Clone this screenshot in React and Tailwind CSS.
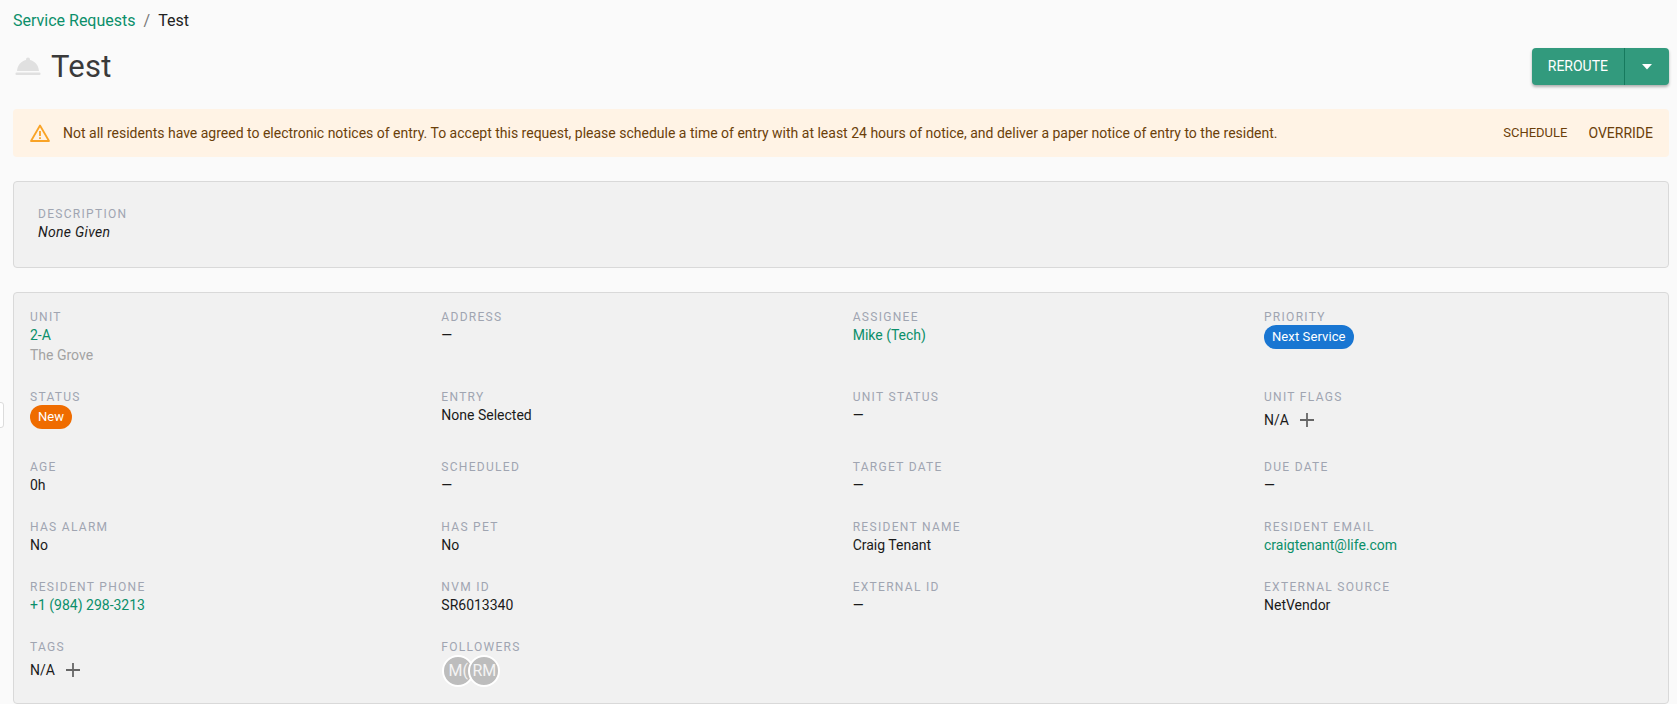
import React from "react";

const Label = ({ children }) => (
  <div className="text-[12px] leading-[16px] tracking-[1.3px] uppercase text-[#a0a5b1]">{children}</div>
);
const Value = ({ children }) => <div className="text-[14px] leading-[20px] text-[#1a1a1a]">{children}</div>;
const LinkV = ({ children }) => <div className="text-[14px] leading-[20px] text-[#0b8f6a]">{children}</div>;
const Dash = () => <Value>—</Value>;

const Plus = () => (
  <svg width="14" height="14" viewBox="0 0 14 14" className="ml-[11px] text-[#666]">
    <path d="M7 0V14M0 7H14" stroke="currentColor" strokeWidth="1.8" fill="none" />
  </svg>
);

const Field = ({ label, children, h }) => (
  <div className={h}>
    <Label>{label}</Label>
    {children}
  </div>
);

const Pill = ({ children, bg }) => (
  <div className="flex">
    <span className={`flex items-center h-[24px] px-[8px] rounded-full text-white text-[13px] tracking-[0.1px] ${bg}`}>{children}</span>
  </div>
);

const NA = () => (
  <div className="flex items-center h-[30px] text-[14px] text-[#1a1a1a]">
    N/A
    <Plus />
  </div>
);

const Avatar = ({ children, cls }) => (
  <div className={`w-[32px] h-[32px] rounded-full border-2 border-white bg-[#bdbdbd] text-[#f4f4f4] text-[16px] flex items-center justify-center overflow-hidden shrink-0 ${cls || ""}`}>
    {children}
  </div>
);

export default function App() {
  return (
    <div className="relative w-[1677px] h-[704px] overflow-hidden bg-[#fafafa] pl-[13px] pr-[8px] pt-[11px]" style={{ fontFamily: "Roboto, sans-serif" }}>
      <div className="absolute left-[-8px] top-[402px] w-[12px] h-[26px] bg-white border border-[#dcdcdc] rounded-[3px]" />
      <div className="flex items-center h-[20px] text-[16px] leading-[20px]">
        <span className="text-[#0b8f6a]">Service Requests</span>
        <span className="mx-[8px] text-[#777]">/</span>
        <span className="text-[#222]">Test</span>
      </div>

      <div className="flex items-center justify-between mt-[12px] h-[47px]">
        <div className="flex items-center">
          <svg width="26" height="22" viewBox="0 0 26 22" className="text-[#e0e0e0] ml-[2px]">
            <path d="M13 1.500a2 2 0 0 1 2 2v.6C20 5.200 23.500 9.500 24 15H2C2.500 9.500 6 5.200 11 4.100v-.6a2 2 0 0 1 2-2Z" fill="currentColor" />
            <rect x="0.500" y="16.500" width="25" height="2.500" rx="1" fill="currentColor" />
          </svg>
          <span className="ml-[10px] text-[31px] leading-[40px] tracking-[0.01em] text-[#3a3a3a]">Test</span>
        </div>
        <div className="flex h-[37px] rounded-[4px] bg-[#329a7d] text-white shadow-[0_2px_3px_rgba(0,0,0,0.3)]">
          <div className="flex items-center px-[16px] text-[14px] border-r border-[#167a5e]">REROUTE</div>
          <div className="flex items-center justify-center w-[44px]">
            <svg width="12" height="6" viewBox="0 0 12 6"><path d="M1 0h10L6 5.500Z" fill="#fff" /></svg>
          </div>
        </div>
      </div>

      <div className="flex items-center h-[48px] mt-[19px] rounded-[4px] bg-[#fff3e5] pl-[16px] pr-[16px] text-[#6b3f0a]">
        <svg width="22" height="20" viewBox="0 0 22 20" className="shrink-0 text-[#f9a326]">
          <path d="M11 2.500 20 18H2Z" stroke="currentColor" strokeWidth="1.800" strokeLinejoin="round" fill="none" />
          <path d="M11 8v5M11 14.300v1.700" stroke="currentColor" strokeWidth="1.800" fill="none" />
        </svg>
        <span className="ml-[12px] text-[14px] flex-1">
          Not all residents have agreed to electronic notices of entry. To accept this request, please schedule a time of entry with at least 24 hours of notice, and deliver a paper notice of entry to the resident.
        </span>
        <span className="text-[13px] mr-[21px]">SCHEDULE</span>
        <span className="text-[14px]">OVERRIDE</span>
      </div>

      <div className="mt-[24px] h-[87px] rounded-[4px] border border-[#d9d9d9] bg-[#f1f1f1] pl-[24px] pt-[24px]">
        <Label>Description</Label>
        <div className="text-[14px] leading-[20px] italic tracking-[0.3px] text-[#1a1a1a]">None Given</div>
      </div>

      <div className="mt-[24px] h-[412px] rounded-[4px] border border-[#d9d9d9] bg-[#f1f1f1] pl-[16px] pt-[16px]">
        <div className="grid grid-cols-[411.33px_411.33px_411.33px_1fr]">
          <Field label="Unit" h="h-[80px]"><LinkV>2-A</LinkV><div className="text-[14px] leading-[20px] text-[#a3a3a3]">The Grove</div></Field>
          <Field label="Address"><Dash /></Field>
          <Field label="Assignee"><LinkV>Mike (Tech)</LinkV></Field>
          <Field label="Priority"><Pill bg="bg-[#1976d2]">Next Service</Pill></Field>

          <Field label="Status" h="h-[70px]"><Pill bg="bg-[#ef6c00]">New</Pill></Field>
          <Field label="Entry"><Value>None Selected</Value></Field>
          <Field label="Unit Status"><Dash /></Field>
          <Field label="Unit Flags"><NA /></Field>

          <Field label="Age" h="h-[60px]"><Value>0h</Value></Field>
          <Field label="Scheduled"><Dash /></Field>
          <Field label="Target Date"><Dash /></Field>
          <Field label="Due Date"><Dash /></Field>

          <Field label="Has Alarm" h="h-[60px]"><Value>No</Value></Field>
          <Field label="Has Pet"><Value>No</Value></Field>
          <Field label="Resident Name"><Value>Craig Tenant</Value></Field>
          <Field label="Resident Email"><LinkV>craigtenant@life.com</LinkV></Field>

          <Field label="Resident Phone" h="h-[60px]"><LinkV>+1 (984) 298-3213</LinkV></Field>
          <Field label="NVM ID"><Value>SR6013340</Value></Field>
          <Field label="External ID"><Dash /></Field>
          <Field label="External Source"><Value>NetVendor</Value></Field>

          <Field label="Tags"><NA /></Field>
          <Field label="Followers">
            <div className="flex ml-[1px]">
              <Avatar>M(</Avatar>
              <Avatar cls="-ml-[6px]">RM</Avatar>
            </div>
          </Field>
        </div>
      </div>
    </div>
  );
}
